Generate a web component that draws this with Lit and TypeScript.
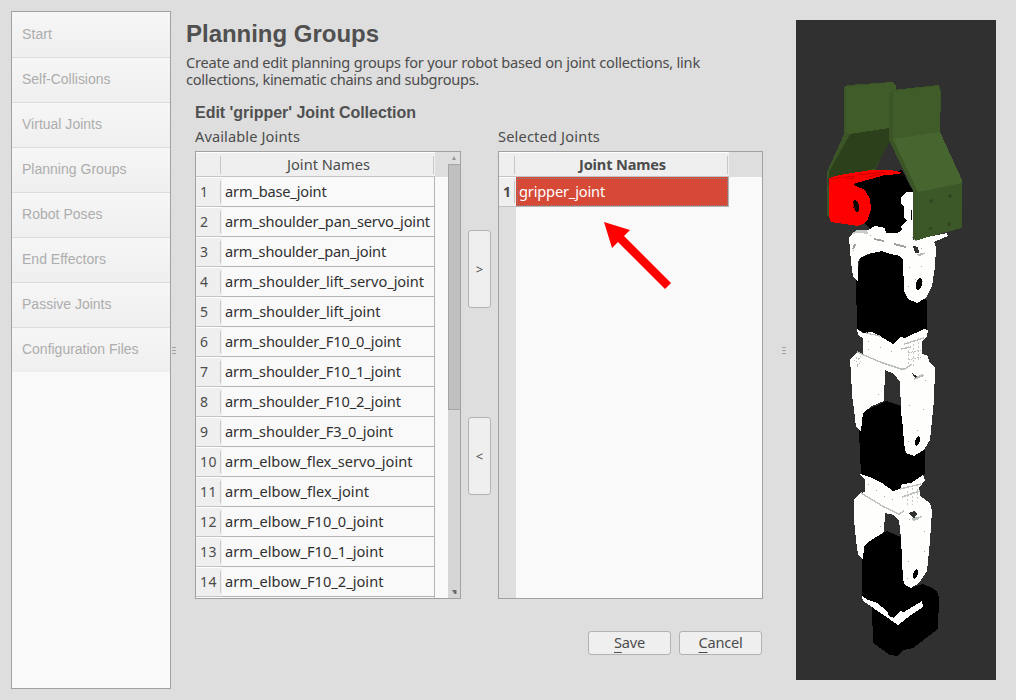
import { LitElement, html, svg, css } from "lit";
import { customElement, property } from "lit/decorators.js";

/** A single line of text spaced out to occupy a given width. */
@customElement("fit-text")
class FitText extends LitElement {
  @property({ type: Number }) width = 0;
  static styles = css`
    :host { display: inline-block; white-space: pre; }
  `;
  firstUpdated() {
    const natural = this.getBoundingClientRect().width;
    const count = (this.textContent ?? "").length;
    if (this.width && count) this.style.letterSpacing = `${(this.width - natural) / count}px`;
  }
  render() {
    return html`<slot></slot>`;
  }
}

@customElement("nav-list")
class NavList extends LitElement {
  static styles = css`
    :host { display: block; box-sizing: border-box; width: 160px; border: 1px solid #a1a1a1; background: #f9f9f9; }
    .item {
      box-sizing: border-box; height: 45px; padding: 0 10px;
      font: 14px/43px "Liberation Sans", Arial, sans-serif; color: #adadad;
      border-bottom: 1px solid #dcdcdc; background: linear-gradient(#f6f6f6, #efefef);
    }
    .item:first-child { height: 46px; padding-top: 1px; }
    .item:last-child { height: 44px; border-bottom: 0; }
  `;
  items: [string, number][] = [
    ["Start", 30], ["Self-Collisions", 88.5], ["Virtual Joints", 80], ["Planning Groups", 104.5],
    ["Robot Poses", 80.5], ["End Effectors", 84], ["Passive Joints", 89.5], ["Configuration Files", 116.5],
  ];
  render() {
    return this.items.map(([t, w]) => html`<div class="item"><fit-text width=${w}>${t}</fit-text></div>`);
  }
}

@customElement("joint-table")
class JointTable extends LitElement {
  @property({ attribute: false }) rows: [string, number][] = [];
  @property({ type: Boolean, reflect: true }) selected = false;
  static styles = css`
    :host {
      display: flex; box-sizing: border-box; height: 448px; border: 1px solid #a1a1a1;
      background: #f9f9f9; overflow: hidden; color: #4c4c4c;
      font: 14.6px "Noto Sans", sans-serif;
    }
    .grid { flex: 1; min-width: 0; overflow: hidden; display: flex; flex-direction: column; }
    .row { display: flex; height: 30px; flex: none; }
    .head { height: 25px; background: #dedede; }
    .num, .title {
      box-sizing: border-box; display: flex; align-items: center; background: #efefef; line-height: 18px;
      border-top: 1px solid #fff; border-bottom: 1px solid #c4c4c4;
    }
    .num { width: 26px; padding: 0 1px 0 4px; justify-content: space-between; font-size: 14px; }
    .num fit-text { padding-bottom: 1px; }
    .title { width: 213px; padding: 0 1px 0 0; justify-content: flex-end; gap: 63px; }
    .title fit-text { padding-bottom: 1px; }
    .tick { width: 1px; height: 22px; background: #c8c8c8; }
    .head .tick { height: 18px; }
    .cell {
      box-sizing: border-box; width: 213px; padding-left: 3px; color: #303030; line-height: 28px;
      border-right: 1px solid #b4b4b4; border-bottom: 1px solid #b4b4b4;
    }
    .bar { width: 12px; display: flex; flex-direction: column; background: #d6d6d6; }
    .arrow { height: 12px; display: flex; align-items: center; justify-content: center; background: #dedede; }
    .arrow.down { margin-top: auto; background: none; }
    .thumb { box-sizing: border-box; height: 246px; border: 1px solid #a4a4a4; border-right: 0; background: #c0c0c0; }
    :host([selected]) .num { width: 17px; padding-right: 1px; font-weight: 700; }
    :host([selected]) .title { font-weight: 700; gap: 61px; }
    :host([selected]) .cell { background: #d64937; color: #fff; outline: 1px dotted #858585; outline-offset: -2px; }
    .rest { flex: 1; width: 17px; background: #dedede; }
  `;
  render() {
    return html`
      <div class="grid">
        <div class="row head">
          <div class="num"><span></span><span class="tick"></span></div>
          <div class="title"><fit-text width=${this.selected ? 87 : 83}>Joint Names</fit-text><span class="tick"></span></div>
        </div>
        ${this.rows.map(([name, w], i) => html`
          <div class="row">
            <div class="num"><fit-text width=${i < 9 ? 8.5 : 17}>${name ? String(i + 1) : ""}</fit-text><span class="tick"></span></div>
            <div class="cell"><fit-text width=${w}>${name}</fit-text></div>
          </div>`)}
        ${this.selected ? html`<div class="rest"></div>` : ""}
      </div>
      ${this.selected ? "" : html`
        <div class="bar">
          <div class="arrow"><svg width="4" height="4"><path d="M0 4L2 0L4 4Z" fill="#969696" /></svg></div>
          <div class="thumb"></div>
          <div class="arrow down"><svg width="5" height="4"><path d="M0 0H4.5V4H2.5Z" fill="#6c6c6c" /></svg></div>
        </div>`}
    `;
  }
}

@customElement("robot-view")
class RobotView extends LitElement {
  static styles = css`
    :host { display: block; width: 200px; height: 660px; background: #303030; }
    svg { display: block; }
  `;
  poly(fill: string, points: string) {
    return svg`<polygon fill=${fill} points=${points} />`;
  }
  render() {
    const dots = [
      [855, 245], [853, 250], [870, 235], [921, 248], [909, 267], [921, 266], [915, 279], [922, 281], [908, 286],
      [868, 341], [880, 347], [891, 351], [868, 349], [857, 364], [878, 394], [925, 380], [909, 405], [923, 409], [917, 430], [908, 441],
      [868, 484], [876, 490], [884, 496], [892, 499], [880, 526], [909, 519], [924, 531], [924, 551], [908, 561], [907, 578],
    ];
    return html`<svg width="200" height="660" viewBox="796 20 200 660" shape-rendering="crispEdges">
      ${this.poly("#3b5527", "844,87 848,85 892,82 896,86 896,131 889,142 875,170 828,178 831,217 827,216 827,172 844,134")}
      ${this.poly("#405c29", "846,87 893,82 896,86 896,128 849,134 846,132")}
      ${this.poly("#2c401c", "850,134 889,128 890,141 875,169 829,178 829,172")}
      ${this.poly("#000", "852,184 902,170 908,182 914,193 914,232 897,234 886,233 881,227 871,229 865,224 870,206")}
      ${this.poly("#f00", "829,178 840,175 874,169.500 888,169.500 901,172 900,174 885,175 853,184 856,186 865,190 870,199 871,209 868,219 863,224 858,226 831,222 829,216")}
      <path d="M830 179L855 176M846 178L854 179M858 175L885 172M865 178L881 174" fill="none" stroke="#bd0000" stroke-width=".7" />
      <ellipse cx="856" cy="206" rx="3" ry="6" fill="#080808" transform="rotate(-12 856 206)" />
      <path d="M853 203l2 7" stroke="#a00" />
      ${this.poly("#fff", "901,197 906,192 914,192 914,232 904,235 901,226 907,221 904,218 904,207 901,203")}
      ${this.poly("#000", "911,210 912,210 912,220 911,220")}

      ${this.poly("#000", "860,258 880,250 902,253 906,290 927,300 927,333 901,342 893,344 870,336 857,329 856,279")}
      ${this.poly("#fefffd", "849,238 853,233 857,230 868,230 875,226 885,228 886,233 897,233 904,229 913,232 913,240 947,233 948,236 934,242 936,247 935,267 932,286 926,298 917,303 908,299 904,291 903,260 900,256 890,254 882,251 868,254 860,258 858,262 858,281 853,277 851,262")}
      ${this.poly("#c8ccc8", "851,234 857,230 867,230 868,234 859,233")}
      <path d="M874 239L884 241M894 244L906 247M855 244L853 249M913 237L917 241" fill="none" stroke="#9da29e" stroke-width="1.800" />
      ${this.poly("#303030", "913,246 918,247 919,253 915,253")}
      ${this.poly("#b5bbb6", "915,255 921,253 926,253 920,256")}

      ${this.poly("#000", "863,412 886,401 902,406 905,453 925,450 925,474 911,483 902,485 900,489 893,491 882,483 861,475 859,432")}
      ${this.poly("#fefffd", "857,329 863,333 872,332 880,336 893,344 900,337 905,338 924,329 928,330 927,337 922,341 922,354 928,356 929,361 935,368 934,400 930,440 924,450 914,456 906,453 904,444 903,428 901,412 900,382 894,374 885,370 884,401 872,406 863,413 861,431 856,427 854,410 852,395 851,373 850,360 857,352 863,354 863,338 858,335")}
      <path d="M857 352L880 362L901 369H905L912 364M866 333L880 336M901 349L911 347M904 344L924 338" fill="none" stroke="#b8beb9" stroke-width="1.300" />
      <path d="M856 362L861 356M857 367L861 361M854 361L858 356M908 353L921 350M908 360L921 357" fill="none" stroke="#b8beb9" stroke-dasharray="2 1" />
      ${this.poly("#303030", "912,373 917,376 915,378")}
      ${this.poly("#bac0bb", "913,379 922,374 924,376 914,380")}

      ${this.poly("#000", "864,544 887,531 903,538 910,588 923,584 930,587 937,591 939,598 938,629 913,648 904,650 897,656 890,655 873,643 872,608 862,598 862,560")}
      ${this.poly("#fefffd", "860,474 872,478 882,483 893,491 900,489 902,484 911,483 923,475 925,480 919,488 920,496 930,503 932,511 930,541 927,571 919,583 911,588 905,585 903,579 902,560 901,538 899,521 894,515 885,513 884,532 867,543 864,547 863,559 858,555 856,540 854,520 854,500 860,493 865,492 865,480")}
      <path d="M861 493L884 507L899 514L904 511M900 489L921 484M902 497L920 491" fill="none" stroke="#bdc2be" stroke-width="1.400" />
      ${this.poly("#303030", "909,513 914,511 917,514 914,519")}
      ${this.poly("#bac0bb", "912,518 923,516 917,520 913,521")}
      ${this.poly("#fff", "862,596 868,600 877,603 887,611 889,616 894,618 900,611 904,612 922,601 923,607 911,615 898,625 885,616 863,601")}
      <path d="M907 491L907 506M912 488V505M917 489V502M908 342V364M913 340V366M918 338V362" stroke="#c5c9c6" stroke-dasharray="2 2" />

      <g fill="#000">
        <ellipse cx="919" cy="284" rx="3" ry="6" transform="rotate(15 919 284)" />
        <ellipse cx="917.5" cy="441" rx="2.3" ry="5" transform="rotate(20 917.5 441)" />
        <ellipse cx="915.5" cy="574" rx="2.3" ry="5" transform="rotate(20 915.5 574)" />
      </g>
      ${dots.map(([x, y]) => svg`<rect x=${x} y=${y} width="1" height="1" fill="#a7ada8" />`)}

      ${this.poly("#3b5526", "889,93 892,90 939,85 941,92 940,132 962.5,181 962,228 917,240 913,239 913,190 889,140")}
      ${this.poly("#405c29", "893,91 938,85.5 940,91 940,132 893,139")}
      ${this.poly("#47652e", "893,139 940,132 962.5,181 962,183 918,192")}
      ${this.poly("#3d5828", "918,192 962,183 961,227 918,240")}
      <g fill="#304721">
        <ellipse cx="931" cy="201" rx="1.7" ry="2" /><ellipse cx="950" cy="196" rx="1.7" ry="2" />
        <ellipse cx="930.5" cy="228.5" rx="1.7" ry="2" /><ellipse cx="949" cy="224" rx="1.7" ry="2" />
      </g>
    </svg>`;
  }
}

@customElement("app-root")
class AppRoot extends LitElement {
  static styles = css`
    :host {
      display: grid; grid-template-columns: 160px 6px 597px 22px 200px; box-sizing: border-box;
      position: relative; width: 1016px; height: 700px; padding: 11px 20px 11px 11px; background: #dedede;
      color: #4c4c4c; font: 14.6px "Noto Sans", sans-serif; overflow: hidden;
    }
    nav-list { height: 678px; }
    robot-view { margin-top: 9px; }
    .grip { align-self: center; justify-self: center; display: grid; gap: 2px; width: 4px; }
    .grip i { height: 1px; background: #a2a2a2; }
    .grip.right { justify-self: start; margin-left: 8px; }
    main { padding-left: 9px; display: flex; flex-direction: column; }
    h1, h2, p { margin: 0; }
    h1 { height: 41px; font: 700 24px/45px "Liberation Sans", Arial, sans-serif; color: #505050; }
    p { box-sizing: border-box; display: flex; flex-direction: column; align-items: flex-start; line-height: 17px; padding-top: 2px; height: 51px; }
    h2 { margin-left: 9px; height: 19px; font: 700 16px/20px "Liberation Sans", Arial, sans-serif; color: #505050; }
    .pair { display: grid; grid-template-columns: 266px 37px 265px; margin-left: 9px; }
    .label { height: 29px; line-height: 28px; }
    .moves { display: flex; flex-direction: column; align-items: center; padding-top: 108px; gap: 109px; }
    .btn {
      box-sizing: border-box; border: 1px solid #b2b2b2; border-radius: 3px; background: #efefef;
      display: flex; align-items: center; justify-content: center; color: #4c4c4c;
    }
    .move { width: 23px; height: 78px; font-size: 13px; }
    .actions { display: flex; justify-content: flex-end; gap: 8px; margin-top: 32px; padding-right: 12px; }
    .act { width: 83px; height: 24px; padding-bottom: 2px; }
    u { text-decoration-thickness: 1px; text-underline-offset: 4px; }
    .pointer { position: absolute; left: 600px; top: 218px; }
  `;
  available: [string, number][] = [
    ["arm_base_joint", 101.5], ["arm_shoulder_pan_servo_joint", 205], ["arm_shoulder_pan_joint", 161],
    ["arm_shoulder_lift_servo_joint", 199], ["arm_shoulder_lift_joint", 155.5], ["arm_shoulder_F10_0_joint", 176],
    ["arm_shoulder_F10_1_joint", 176], ["arm_shoulder_F10_2_joint", 176], ["arm_shoulder_F3_0_joint", 168],
    ["arm_elbow_flex_servo_joint", 187.5], ["arm_elbow_flex_joint", 144], ["arm_elbow_F10_0_joint", 158.5],
    ["arm_elbow_F10_1_joint", 158.5], ["arm_elbow_F10_2_joint", 158.5], ["", 0],
  ];
  render() {
    return html`
      <nav-list></nav-list>
      <div class="grip"><i></i><i></i><i></i></div>
      <main>
        <h1><fit-text width="193">Planning Groups</fit-text></h1>
        <p>
          <fit-text width="514">Create and edit planning groups for your robot based on joint collections, link</fit-text>
          <fit-text width="293">collections, kinematic chains and subgroups.</fit-text>
        </p>
        <h2><fit-text width="221">Edit 'gripper' Joint Collection</fit-text></h2>
        <div class="pair">
          <div><div class="label"><fit-text width="105">Available Joints</fit-text></div>
            <joint-table .rows=${this.available}></joint-table></div>
          <div class="moves">
            <div class="btn move">&gt;</div><div class="btn move">&lt;</div></div>
          <div><div class="label"><fit-text width="102">Selected Joints</fit-text></div>
            <joint-table selected .rows=${[["gripper_joint", 86]]}></joint-table></div>
        </div>
        <div class="actions">
          <div class="btn act"><fit-text width="31"><u>S</u>ave</fit-text></div>
          <div class="btn act"><fit-text width="44"><u>C</u>ancel</fit-text></div>
        </div>
      </main>
      <div class="grip right"><i></i><i></i><i></i></div>
      <robot-view></robot-view>
      <svg class="pointer" width="74" height="74" viewBox="600 218 74 74">
        <path d="M604 222L630 230L624 236L671 283L665 289L618 242L612 248Z" fill="#f00" />
      </svg>
    `;
  }
}
